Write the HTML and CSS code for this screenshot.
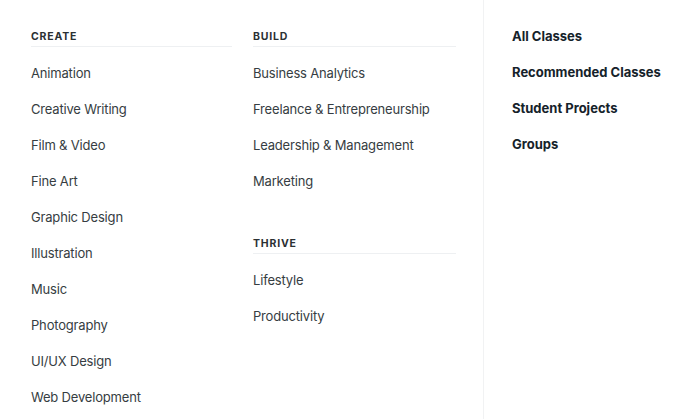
FILE: index.html
```html
<!DOCTYPE html>
<html lang="en">
<head>
<meta charset="utf-8">
<title>Browse</title>
<link rel="stylesheet" href="styles.css">
</head>
<body>
<div class="menu">
  <div class="cats">
    <div class="col col-create">
      <h3 class="head">Create</h3>
      <ul class="list">
        <li><a href="#">Animation</a></li>
        <li><a href="#">Creative Writing</a></li>
        <li><a href="#">Film &amp; Video</a></li>
        <li><a href="#">Fine Art</a></li>
        <li><a href="#">Graphic Design</a></li>
        <li><a href="#">Illustration</a></li>
        <li><a href="#">Music</a></li>
        <li><a href="#">Photography</a></li>
        <li><a href="#">UI/UX Design</a></li>
        <li><a href="#">Web Development</a></li>
      </ul>
    </div>
    <div class="col col-build">
      <h3 class="head">Build</h3>
      <ul class="list">
        <li><a href="#">Business Analytics</a></li>
        <li><a href="#">Freelance &amp; Entrepreneurship</a></li>
        <li><a href="#">Leadership &amp; Management</a></li>
        <li><a href="#">Marketing</a></li>
      </ul>
      <h3 class="head head-next">Thrive</h3>
      <ul class="list">
        <li><a href="#">Lifestyle</a></li>
        <li><a href="#">Productivity</a></li>
      </ul>
    </div>
  </div>
  <div class="side">
    <ul class="side-list">
      <li><a href="#">All Classes</a></li>
      <li><a href="#">Recommended Classes</a></li>
      <li><a href="#">Student Projects</a></li>
      <li><a href="#">Groups</a></li>
    </ul>
  </div>
</div>
</body>
</html>
```
FILE: styles.css
```css
html, body {
  margin: 0;
  padding: 0;
  background: #ffffff;
}
body {
  font-family: "Inter", "Noto Sans", sans-serif;
  color: #363d42;
}
ul {
  list-style: none;
  margin: 0;
  padding: 0;
}
a {
  color: inherit;
  text-decoration: none;
}
.menu {
  display: flex;
  height: 100vh;
}
.cats {
  display: flex;
  gap: 21px;
  padding-left: 31px;
  width: 425px;
}
.col-create {
  width: 201px;
}
.col-build {
  width: 203px;
}
.head {
  margin: 0;
  padding: 29px 0 1px;
  line-height: 16px;
  font-size: 10.5px;
  font-weight: 700;
  letter-spacing: 0.8px;
  text-transform: uppercase;
  color: #2b3033;
  border-bottom: 1px solid #eef0f2;
}
.head-next {
  margin-top: 8px;
}
.list {
  margin-top: 8px;
}
.list li {
  line-height: 36px;
  font-size: 13px;
  letter-spacing: -0.18px;
}
.side {
  margin-left: 27px;
  border-left: 1px solid #f1f2f3;
  padding: 18px 0 0 28px;
  flex: 1;
}
.side-list li {
  line-height: 36px;
  font-size: 13px;
  font-weight: 700;
  color: #15222a;
}
```
